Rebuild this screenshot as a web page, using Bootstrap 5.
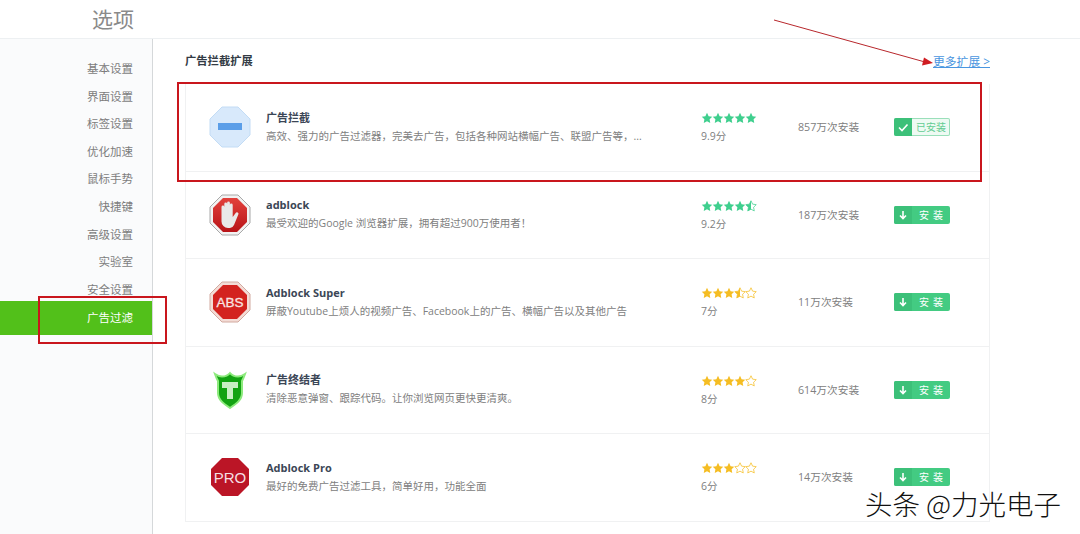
<!DOCTYPE html>
<html lang="zh-CN">
<head>
    <meta charset="UTF-8">
    <meta name="viewport" content="width=device-width, initial-scale=1.0">
    <title>选项</title>
    <link href="https://cdn.jsdelivr.net/npm/bootstrap@5.3.0/dist/css/bootstrap.min.css" rel="stylesheet">
    <style>
        html, body { height: 534px; overflow: hidden; }
        body { font-family: "Open Sans", "Noto Sans CJK SC", sans-serif; background: #fff; color: #666; position: relative; }
        .top-bar { height: 39px; border-bottom: 1px solid #edf0f2; padding-left: 92px; font-size: 21px; line-height: 39px; color: #8a8a8a; }
        .page-body { height: 495px; }
        .side-menu { width: 153px; flex: none; background: #fafbfc; border-right: 1px solid #d5d8da; padding-top: 16px; }
        .side-item { height: 27.6px; line-height: 27.6px; font-size: 11.500px; color: #7d7d7d; text-align: right; padding-right: 19px; }
        .side-item.on { height: 34px; line-height: 34px; margin-top: -2.4px; background: #52c01a; color: #fff; padding-right: 19px; }
        .main-area { padding: 0 90px 0 32px; flex: 1; min-width: 0; }
        .head-row { height: 45px; font-size: 11.300px; }
        .head-title { font-weight: 700; color: #333b45; }
        .more-link { font-size: 11.800px; color: #4a96e0; text-decoration: underline; }
        .ext-list { border-left: 1px solid #f0f1f2; border-right: 1px solid #f0f1f2; }
        .ext-row { height: 87.5px; border-bottom: 1px solid #f0f1f2; padding-left: 23px; }
        .ext-icon { width: 42px; height: 42px; flex: none; margin-right: 15px; }
        .ext-text { width: 435px; flex: none; line-height: 18px; padding-bottom: 1px; }
        .ext-name { font-size: 11px; font-weight: 700; color: #3b4656; }
        .ext-desc { font-size: 10.500px; color: #808080; white-space: nowrap; }
        .ext-rate { width: 97px; flex: none; font-size: 10.500px; color: #808080; line-height: 18px; }
        .star-row { height: 18px; }
        .star-row svg { width: 12px; height: 12px; flex: none; margin-right: -1px; }
        .ext-count { width: 96px; flex: none; font-size: 10.700px; color: #808080; }
        .get-btn { width: 56px; height: 18px; border-radius: 2px; font-size: 10px; line-height: 18px; background: #43cb82; color: #fff; overflow: hidden; }
        .get-mark { width: 18px; height: 18px; flex: none; background: #3cc079; }
        .get-label { flex: 1; text-align: center; letter-spacing: 4px; padding-left: 4px; }
        .get-btn.done { background: #eefaf3; color: #62cc92; box-shadow: inset 0 0 0 1px #9adfba; }
        .get-btn.done .get-label { letter-spacing: 0; padding-left: 0; }
        .mark-box { position: absolute; border: 2px solid #c9161d; pointer-events: none; }
        .mark-row { left: 177px; top: 82px; width: 805px; height: 100px; }
        .mark-side { left: 38px; top: 296px; width: 129px; height: 48px; }
        .arrow-note { position: absolute; left: 770px; top: 16px; width: 165px; height: 52px; }
        .water-text { position: absolute; left: 865px; top: 484px; font-size: 27.500px; line-height: 38px; font-weight: 300; color: #111; text-shadow: 1px 1px 0 #fff, -1px -1px 0 #fff, 1px -1px 0 #fff, -1px 1px 0 #fff; white-space: nowrap; font-family: "Noto Sans CJK SC", sans-serif; }
    </style>
</head>
<body>
    <svg width="0" height="0" class="position-absolute">
        <defs>
            <path id="starShape" d="M12 1.5l3.2 6.8 7.3 1-5.3 5.2 1.3 7.4-6.5-3.6-6.5 3.6 1.3-7.4L1.500 9.300l7.300-1z"/>
            <clipPath id="halfClip"><rect x="0" y="0" width="12" height="24"/></clipPath>
            <linearGradient id="redFill" x1="0" y1="0" x2="0" y2="1"><stop offset="0" stop-color="#e2413c"/><stop offset="1" stop-color="#b81418"/></linearGradient>
        </defs>
    </svg>

    <div class="top-bar">选项</div>
    <div class="page-body d-flex">
        <div class="side-menu">
            <div class="side-item">基本设置</div>
            <div class="side-item">界面设置</div>
            <div class="side-item">标签设置</div>
            <div class="side-item">优化加速</div>
            <div class="side-item">鼠标手势</div>
            <div class="side-item">快捷键</div>
            <div class="side-item">高级设置</div>
            <div class="side-item">实验室</div>
            <div class="side-item">安全设置</div>
            <div class="side-item on">广告过滤</div>
        </div>
        <div class="main-area">
            <div class="head-row d-flex align-items-center justify-content-between">
                <span class="head-title">广告拦截扩展</span>
                <span class="more-link">更多扩展 &gt;</span>
            </div>
            <div class="ext-list" id="extList"></div>
        </div>
    </div>

    <!-- 截图上的红色标注 -->
    <div class="mark-box mark-row"></div>
    <div class="mark-box mark-side"></div>
    <svg class="arrow-note" viewBox="0 0 165 52">
        <line x1="4" y1="4" x2="155" y2="46" stroke="#b8272c" stroke-width="1"/>
        <path d="M163 47l-11 2.500 2-8z" fill="#d01c22"/>
    </svg>
    <div class="water-text">头条 @力光电子</div>

    <script>
        const icons = {
            block: `<svg class="ext-icon" viewBox="0 0 42 42"><path d="M13 1h16l12 12v16L29 41H13L1 29V13z" fill="#d8e9fb" stroke="#c3dcf5"/><rect x="9" y="17" width="24" height="7" fill="#5b9ee8"/></svg>`,
            hand: `<svg class="ext-icon" viewBox="0 0 42 42"><path d="M13 1h16l12 12v16L29 41H13L1 29V13z" fill="#f2f2f2" stroke="#a8a8a8"/><path d="M14 4h14l10 10v14L28 38H14L4 28V14z" fill="url(#redFill)"/><path d="M12.500 20v-7a1.400 1.400 0 0 1 2.800 0v6-9a1.400 1.400 0 0 1 2.800 0v9-10a1.400 1.400 0 0 1 2.800 0v10-8a1.400 1.400 0 0 1 2.800 0v12l3-4a1.500 1.500 0 0 1 2.600 1.500L25 31a5 5 0 0 1-4 3h-2a6.500 6.500 0 0 1-6.500-6.500z" fill="#e9e9e9"/></svg>`,
            abs: `<svg class="ext-icon" viewBox="0 0 42 42"><path d="M13 1h16l12 12v16L29 41H13L1 29V13z" fill="#f3dcd6" stroke="#d2aaa0"/><path d="M14 4h14l10 10v14L28 38H14L4 28V14z" fill="#d3231f"/><text x="21" y="25.500" text-anchor="middle" font-family="Liberation Sans" font-size="13.500" fill="#f8e6e3" stroke="#f8e6e3" stroke-width="0.300">ABS</text></svg>`,
            shield: `<svg class="ext-icon" viewBox="0 0 42 42"><path d="M6 5c3 2 5 2.500 7 2.500 3 0 6-1 8-3.500 2 2.500 5 3.500 8 3.500 2 0 4-.5 7-2.500-1 3-2 5-3 7v12c0 7-6 11-12 15-6-4-12-8-12-15V12C8 10 7 8 6 5z" fill="#12a312" stroke="#8cea7c" stroke-width="2"/><path d="M13 13h16v6h-5v11h-6V19h-5z" fill="#c9efc4"/></svg>`,
            pro: `<svg class="ext-icon" viewBox="0 0 42 42"><path d="M13 2h16l11 11v16L29 40H13L2 29V13z" fill="#bb1526"/><text x="21" y="26.500" text-anchor="middle" font-family="Liberation Sans" font-size="15" fill="#f6dfe2">PRO</text></svg>`
        };

        const extensions = [
            { icon: 'block', name: '广告拦截', desc: '高效、强力的广告过滤器，完美去广告，包括各种网站横幅广告、联盟广告等，...', stars: 5, color: '#3fcf8e', score: '9.9分', count: '857万次安装', done: true },
            { icon: 'hand', name: 'adblock', desc: '最受欢迎的Google 浏览器扩展，拥有超过900万使用者！', stars: 4.5, color: '#3fcf8e', score: '9.2分', count: '187万次安装' },
            { icon: 'abs', name: 'Adblock Super', desc: '屏蔽Youtube上烦人的视频广告、Facebook上的广告、横幅广告以及其他广告', stars: 3.5, color: '#f5bd23', score: '7分', count: '11万次安装' },
            { icon: 'shield', name: '广告终结者', desc: '清除恶意弹窗、跟踪代码。让你浏览网页更快更清爽。', stars: 4, color: '#f5bd23', score: '8分', count: '614万次安装' },
            { icon: 'pro', name: 'Adblock Pro', desc: '最好的免费广告过滤工具，简单好用，功能全面', stars: 3, color: '#f5bd23', score: '6分', count: '14万次安装' }
        ];

        // 五颗星，可以有半颗
        function starRow(value, color) {
            let html = '';
            for (let i = 1; i <= 5; i++) {
                const outline = `<use href="#starShape" fill="none" stroke="${color}" stroke-width="1.500"/>`;
                if (i <= value) {
                    html += `<svg viewBox="0 0 24 24"><use href="#starShape" fill="${color}"/></svg>`;
                } else if (i - 0.5 <= value) {
                    html += `<svg viewBox="0 0 24 24">${outline}<use href="#starShape" fill="${color}" clip-path="url(#halfClip)"/></svg>`;
                } else {
                    html += `<svg viewBox="0 0 24 24">${outline}</svg>`;
                }
            }
            return html;
        }

        function buttonMark(done) {
            const line = done ? 'M5 9.500l3 3 5.500-6' : 'M9 5v7M6 9.500l3 3 3-3';
            return `<span class="get-mark d-flex align-items-center justify-content-center"><svg width="18" height="18" viewBox="0 0 18 18"><path d="${line}" fill="none" stroke="#fff" stroke-width="1.600"/></svg></span>`;
        }

        document.getElementById('extList').innerHTML = extensions.map(ext => `
            <div class="ext-row d-flex align-items-center">
                ${icons[ext.icon]}
                <div class="ext-text">
                    <div class="ext-name">${ext.name}</div>
                    <div class="ext-desc">${ext.desc}</div>
                </div>
                <div class="ext-rate">
                    <div class="star-row d-flex align-items-center">${starRow(ext.stars, ext.color)}</div>
                    <div>${ext.score}</div>
                </div>
                <div class="ext-count">${ext.count}</div>
                <div class="get-btn d-flex ${ext.done ? 'done' : ''}">
                    ${buttonMark(ext.done)}
                    <span class="get-label">${ext.done ? '已安装' : '安装'}</span>
                </div>
            </div>
        `).join('');
    </script>
    <script src="https://cdn.jsdelivr.net/npm/bootstrap@5.3.0/dist/js/bootstrap.bundle.min.js"></script>
</body>
</html>
